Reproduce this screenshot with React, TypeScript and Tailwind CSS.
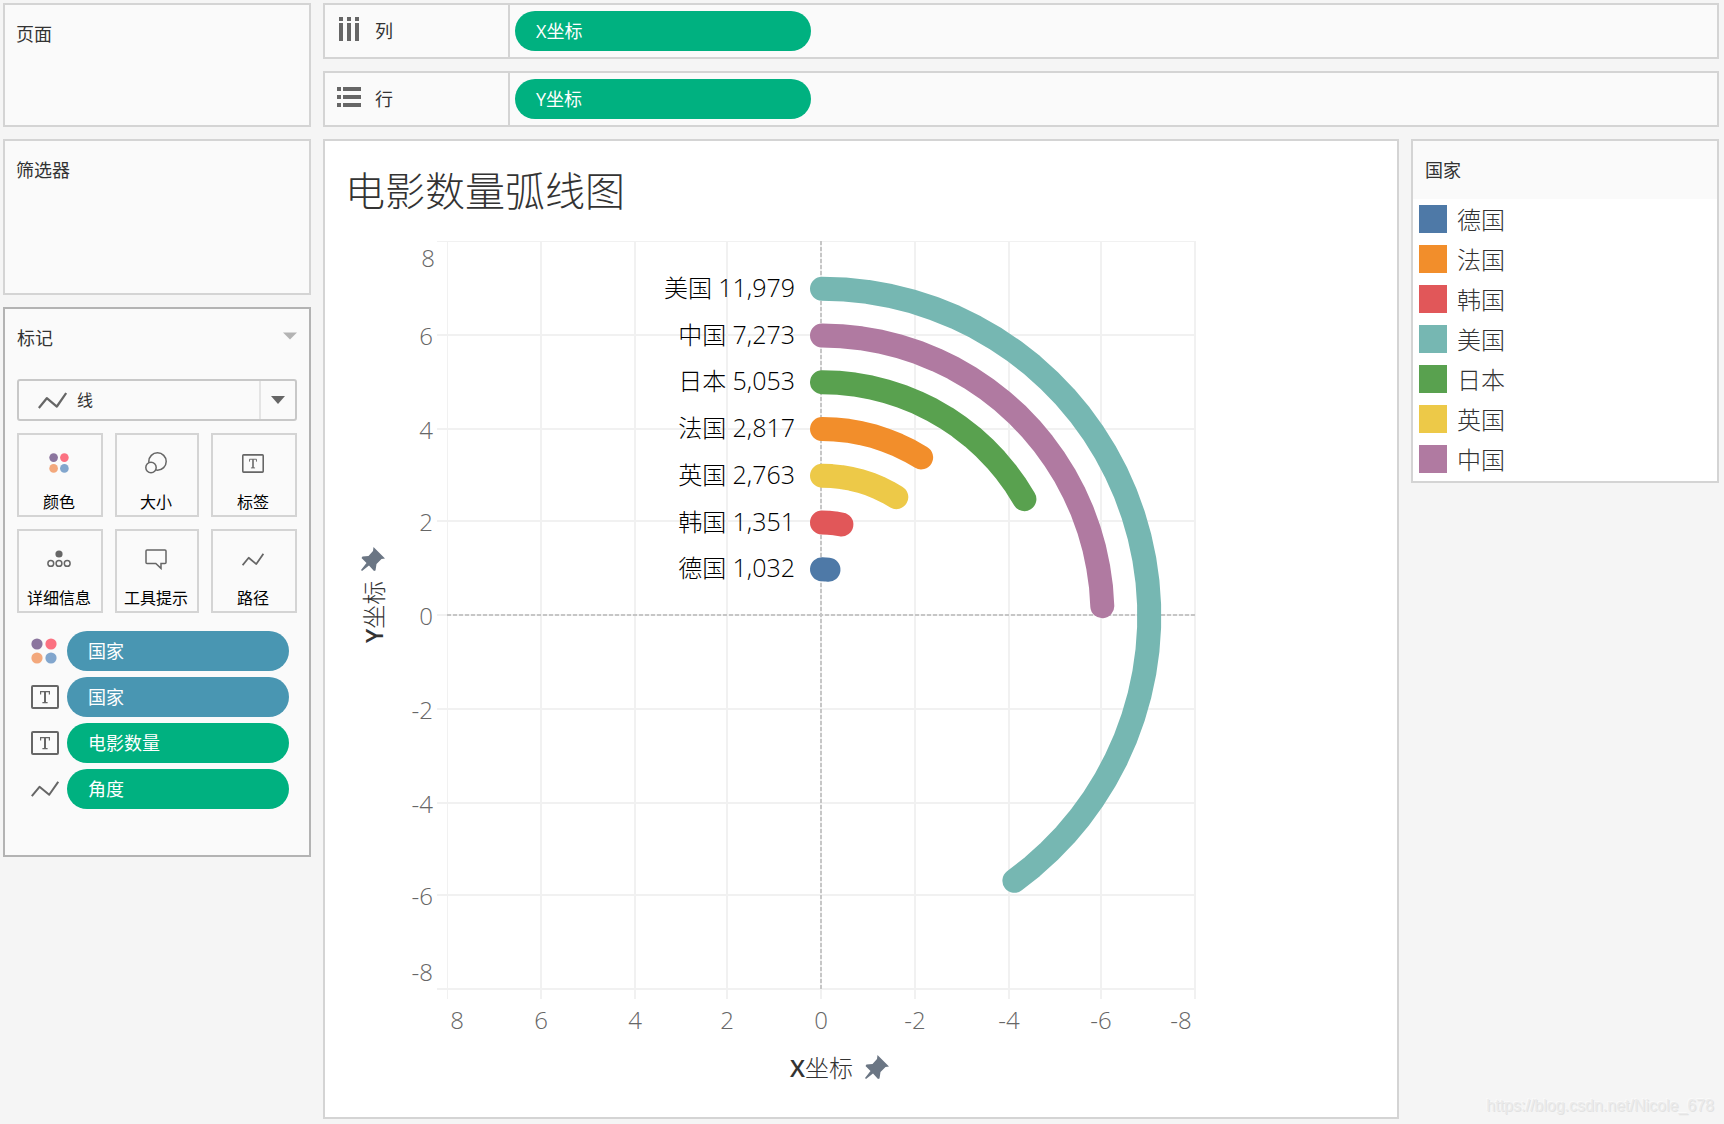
import React from "react";

const GRAY = "#666666";

const GREEN = "bg-[#00b180]";
const BLUE = "bg-[#4996b2]";

function LineIcon({ width, height, stroke = 2 }: { width: number; height: number; stroke?: number }) {
  return (
    <svg width={width} height={height} viewBox="0 0 28 16" fill="none" stroke={GRAY} strokeWidth={stroke} aria-hidden="true">
      <path d="M0.8 15.2 L8.5 5.8 L18.2 13.8 L27.2 0.8" strokeLinejoin="round" />
    </svg>
  );
}

function DotsIcon({ size }: { size: number }) {
  return (
    <svg width={size} height={size} viewBox="0 0 26 26" aria-hidden="true">
      <circle cx="6" cy="6" r="5.6" fill="#8b759e" />
      <circle cx="20" cy="6" r="5.6" fill="#fb7181" />
      <circle cx="6" cy="20" r="5.6" fill="#f3a87c" />
      <circle cx="20" cy="20" r="5.6" fill="#82a6cd" />
    </svg>
  );
}

function TextIcon({ width, height }: { width: number; height: number }) {
  return (
    <svg width={width} height={height} viewBox="0 0 28 24" fill="none" stroke={GRAY} aria-hidden="true">
      <rect x="1" y="1" width="26" height="22" rx="1" strokeWidth="2" />
      <path d="M9.6 9.6 V6.6 H18.4 V9.6 M11.4 17.6 H16.6" strokeWidth="1.2" />
      <path d="M14 6.6 V17.6" strokeWidth="2" />
    </svg>
  );
}

function SizeIcon() {
  return (
    <svg width="22" height="22" viewBox="0 0 22 22" fill="none" stroke={GRAY} strokeWidth="1.5" aria-hidden="true">
      <circle cx="12.5" cy="9.5" r="8.7" />
      <circle cx="6" cy="15.5" r="5.2" fill="#fafafa" />
    </svg>
  );
}

function DetailIcon() {
  return (
    <svg width="24" height="18" viewBox="0 0 24 18" fill="none" stroke={GRAY} strokeWidth="1.5" aria-hidden="true">
      <circle cx="12" cy="4" r="3.6" fill={GRAY} stroke="none" />
      <circle cx="3.8" cy="13.4" r="2.9" />
      <circle cx="12" cy="13.4" r="2.9" />
      <circle cx="20.2" cy="13.4" r="2.9" />
    </svg>
  );
}

function TooltipIcon() {
  return (
    <svg width="22" height="21" viewBox="0 0 22 21" fill="none" stroke={GRAY} strokeWidth="1.5" aria-hidden="true">
      <path d="M2 1 H20 Q21 1 21 2 V13.4 Q21 14.4 20 14.4 H16 V19.4 L10.8 14.4 H2 Q1 14.4 1 13.4 V2 Q1 1 2 1 Z" />
    </svg>
  );
}

function ColumnsIcon() {
  return (
    <svg width="24" height="24" viewBox="0 0 24 24" fill={GRAY} aria-hidden="true">
      <path d="M2 0h4v4H2zM10 0h4v4h-4zM18 0h4v4h-4zM2 6h4v18H2zM10 6h4v18h-4zM18 6h4v18h-4z" />
    </svg>
  );
}

function RowsIcon() {
  return (
    <svg width="24" height="24" viewBox="0 0 24 24" fill={GRAY} aria-hidden="true">
      <path d="M0 2h4v4H0zM0 10h4v4H0zM0 18h4v4H0zM6 2h18v4H6zM6 10h18v4H6zM6 18h18v4H6z" />
    </svg>
  );
}

function Panel({ title, className }: { title: string; className: string }) {
  return (
    <section className={`border-2 border-[#d4d4d4] bg-[#fafafa] px-[11px] pt-[15px] ${className}`}>
      <h2 className="text-[18px] leading-7">{title}</h2>
    </section>
  );
}

function Shelf({ icon, label, field }: { icon: React.ReactNode; label: string; field: string }) {
  return (
    <section className="flex h-14 border-2 border-[#d4d4d4] bg-[#fafafa]">
      <div className="flex w-[185px] shrink-0 items-center gap-3.5 border-r-2 border-[#d4d4d4] pb-1 pl-3">
        {icon}
        <h2 className="pt-1 text-[18px] leading-7">{label}</h2>
      </div>
      <div className="flex flex-1 items-center pl-[5px]">
        <button type="button" className={`h-10 w-[296px] rounded-full pl-[21px] text-left text-[18px] leading-10 text-white ${GREEN}`}>
          {field}
        </button>
      </div>
    </section>
  );
}

const markButtons = [
  { label: "颜色", icon: <DotsIcon size={20} /> },
  { label: "大小", icon: <SizeIcon /> },
  { label: "标签", icon: <TextIcon width={22} height={19} /> },
  { label: "详细信息", icon: <DetailIcon /> },
  { label: "工具提示", icon: <TooltipIcon /> },
  { label: "路径", icon: <LineIcon width={22} height={13} stroke={2.2} /> },
];

const markFields = [
  { label: "国家", icon: <DotsIcon size={26} />, color: BLUE },
  { label: "国家", icon: <TextIcon width={28} height={24} />, color: BLUE },
  { label: "电影数量", icon: <TextIcon width={28} height={24} />, color: GREEN },
  { label: "角度", icon: <LineIcon width={28} height={16} />, color: GREEN },
];

function MarksCard() {
  return (
    <section className="border-2 border-[#b3b3b3] bg-[#fafafa] px-3 pt-[15px] pb-[46px]">
      <div className="flex items-center justify-between">
        <h2 className="text-[18px] leading-7">标记</h2>
        <button type="button" aria-label="标记菜单" className="pb-1">
          <svg width="14" height="8" viewBox="0 0 14 8" aria-hidden="true">
            <path d="M0 0.5H14L7 7.5Z" fill="#b3b3b3" />
          </svg>
        </button>
      </div>

      <div className="relative mt-[27px]">
        <select
          aria-label="标记类型"
          defaultValue="line"
          className="block h-[42px] w-full appearance-none rounded-[3px] border-2 border-[#c8c8c8] bg-[#fafafa] pl-[58px] text-[16px] text-[#333]"
        >
          <option value="line">线</option>
        </select>
        <span className="pointer-events-none absolute inset-y-0 left-[21px] flex items-center">
          <LineIcon width={29} height={17} stroke={2.2} />
        </span>
        <span className="pointer-events-none absolute inset-y-0.5 right-0.5 flex w-9 items-center justify-center border-l-2 border-[#e4e4e4]">
          <svg width="14" height="8" viewBox="0 0 14 8" aria-hidden="true">
            <path d="M0 0H14L7 8Z" fill={GRAY} />
          </svg>
        </span>
      </div>

      <div className="mt-3 grid grid-cols-[86fr_84fr_86fr] gap-3">
        {markButtons.map((b) => (
          <button
            key={b.label}
            type="button"
            className="flex h-21 flex-col items-center border-2 border-[#d4d4d4] pt-3.5 pr-0.5 text-[16px] leading-6 text-black"
          >
            <span className="flex h-7 items-center">{b.icon}</span>
            <span className="mt-[13px] whitespace-nowrap">{b.label}</span>
          </button>
        ))}
      </div>

      <ul className="mt-[18px] flex flex-col gap-1.5 pr-2 pl-3.5">
        {markFields.map((f, i) => (
          <li key={i} className="flex items-center">
            <span className="flex w-9 shrink-0 items-center">{f.icon}</span>
            <button type="button" className={`h-10 flex-1 rounded-full pl-[21px] text-left text-[18px] leading-10 text-white ${f.color}`}>
              {f.label}
            </button>
          </li>
        ))}
      </ul>
    </section>
  );
}

/* Chart geometry, with the origin of the plot at (0, 0). */
const UNIT = 46.75;
const LEFT = -375;
const RIGHT = 373;
const TOP = -375;
const BOTTOM = 373;

const arcs = [
  { name: "美国", value: "11,979", radius: 7, angle: 144, color: "#76b7b2" },
  { name: "中国", value: "7,273", radius: 6, angle: 88, color: "#b07aa1" },
  { name: "日本", value: "5,053", radius: 5, angle: 60, color: "#59a14f" },
  { name: "法国", value: "2,817", radius: 4, angle: 32, color: "#f28e2b" },
  { name: "英国", value: "2,763", radius: 3, angle: 32, color: "#edc948" },
  { name: "韩国", value: "1,351", radius: 2, angle: 12, color: "#e15759" },
  { name: "德国", value: "1,032", radius: 1, angle: 8, color: "#4e79a7" },
];

const ticks = [
  { label: "8", at: -375, textX: -365, textY: -349 },
  { label: "6", at: -281, textX: -281, textY: -271 },
  { label: "4", at: -187, textX: -187, textY: -177 },
  { label: "2", at: -95, textX: -95, textY: -85 },
  { label: "0", at: -1, textX: -1, textY: 9 },
  { label: "-2", at: 93, textX: 93, textY: 103 },
  { label: "-4", at: 187, textX: 187, textY: 197 },
  { label: "-6", at: 279, textX: 279, textY: 289 },
  { label: "-8", at: 373, textX: 359, textY: 365 },
];

function arcPoints(radius: number, angle: number) {
  const points: string[] = [];
  for (let a = 0; a <= angle; a += 4) {
    const t = (a * Math.PI) / 180;
    points.push(`${(radius * UNIT * Math.sin(t)).toFixed(1)},${(-radius * UNIT * Math.cos(t)).toFixed(1)}`);
  }
  return points.join(" ");
}

function Pin({ x, y }: { x: number; y: number }) {
  return (
    <path
      transform={`translate(${x} ${y})`}
      d="M12.5 0 L24 11.5 L20.5 12 L15.5 17 L14.5 23.5 L13 24 L8 18.5 L1 24 L0 23 L5.5 16 L0.5 11 L1.5 9.5 L7.5 9 L12 4 Z"
      fill="#6b7684"
    />
  );
}

function ArcChart() {
  return (
    <svg
      width="850"
      height="860"
      viewBox="-467 -381 850 860"
      role="img"
      aria-label="电影数量弧线图"
      className="mt-3.5 ml-[30px] block max-w-full shrink-0"
    >
      {ticks.map((t) => (
        <g key={t.label} stroke="#f1f1f1" strokeWidth={t.at === LEFT ? 1 : 2} shapeRendering="crispEdges">
          <path d={`M${LEFT - 10} ${t.at} H${RIGHT}`} />
          <path d={`M${t.at} ${TOP} V${BOTTOM + 10}`} />
        </g>
      ))}
      <g stroke="#c6c6c6" strokeWidth="2" strokeDasharray="4 2">
        <path d={`M-1 ${TOP} V${BOTTOM}`} />
        <path d={`M${LEFT} -1 H${RIGHT}`} />
      </g>

      <g fill="none" strokeWidth="24" strokeLinecap="round" strokeLinejoin="round">
        {arcs.map((a) => (
          <polyline key={a.name} points={arcPoints(a.radius, a.angle)} stroke={a.color} />
        ))}
      </g>

      <g className="text-2xl font-light" textAnchor="end" fill="#000000">
        {arcs.map((a) => (
          <text key={a.name} x="-27" y={Math.round(8 - a.radius * UNIT)}>
            {a.name} <tspan className="text-[25px]">{a.value}</tspan>
          </text>
        ))}
      </g>

      <g className="text-2xl font-light" fill={GRAY}>
        {ticks.map((t) => (
          <g key={t.label}>
            <text x={t.at === TOP ? -387 : -389} y={t.textY} textAnchor="end">
              {t.label}
            </text>
            <text x={t.textX} y="413" textAnchor="middle">
              {t.label}
            </text>
          </g>
        ))}
      </g>

      <g className="text-2xl font-light" fill="#333333">
        <text x="-32" y="461">
          <tspan className="font-semibold">X</tspan>坐标
        </text>
        <text transform="translate(-439 27) rotate(-90)">
          <tspan className="font-semibold">Y</tspan>坐标
        </text>
      </g>
      <Pin x={43} y={439} />
      <Pin x={-461} y={-69} />
    </svg>
  );
}

const legend = [
  { name: "德国", color: "bg-[#4e79a7]" },
  { name: "法国", color: "bg-[#f28e2b]" },
  { name: "韩国", color: "bg-[#e15759]" },
  { name: "美国", color: "bg-[#76b7b2]" },
  { name: "日本", color: "bg-[#59a14f]" },
  { name: "英国", color: "bg-[#edc948]" },
  { name: "中国", color: "bg-[#b07aa1]" },
];

function Legend() {
  return (
    <aside className="w-[308px] shrink-0 self-start border-2 border-[#d4d4d4] bg-white">
      <h2 className="bg-[#fafafa] px-3 py-[15px] text-[18px] leading-7">国家</h2>
      <ul className="pb-0.5 pl-1.5">
        {legend.map((l) => (
          <li key={l.name} className="flex h-10 items-center gap-2.5 text-2xl font-light">
            <span className={`size-7 ${l.color}`} />
            <span className="pt-0.5">{l.name}</span>
          </li>
        ))}
      </ul>
    </aside>
  );
}

export default function App() {
  return (
    <div className="relative flex min-h-screen gap-3 bg-[#f5f5f5] pt-[3px] pr-[5px] pb-[5px] pl-[3px] font-['Open_Sans','Noto_Sans_CJK_SC',sans-serif] font-normal text-[#333]">
      <div className="flex w-[308px] shrink-0 flex-col gap-3">
        <Panel title="页面" className="h-31" />
        <Panel title="筛选器" className="h-39" />
        <MarksCard />
      </div>

      <div className="flex min-w-0 flex-1 flex-col gap-3">
        <Shelf icon={<ColumnsIcon />} label="列" field="X坐标" />
        <Shelf icon={<RowsIcon />} label="行" field="Y坐标" />
        <div className="flex flex-1 gap-3">
          <main className="flex min-w-0 flex-1 flex-col border-2 border-[#d4d4d4] bg-white">
            <h1 className="pt-5 pl-5 text-[40px] leading-[60px] font-light">电影数量弧线图</h1>
            <ArcChart />
          </main>
          <Legend />
        </div>
      </div>

      <span className="pointer-events-none absolute right-2.5 bottom-1.5 font-['Liberation_Sans',Arial,sans-serif] text-[16px] leading-6 font-normal text-[#ebebeb] [text-shadow:1px_1px_0_#e2e2e2,-1px_-1px_0_#fafafa]">
        https://blog.csdn.net/Nicole_678
      </span>
    </div>
  );
}
